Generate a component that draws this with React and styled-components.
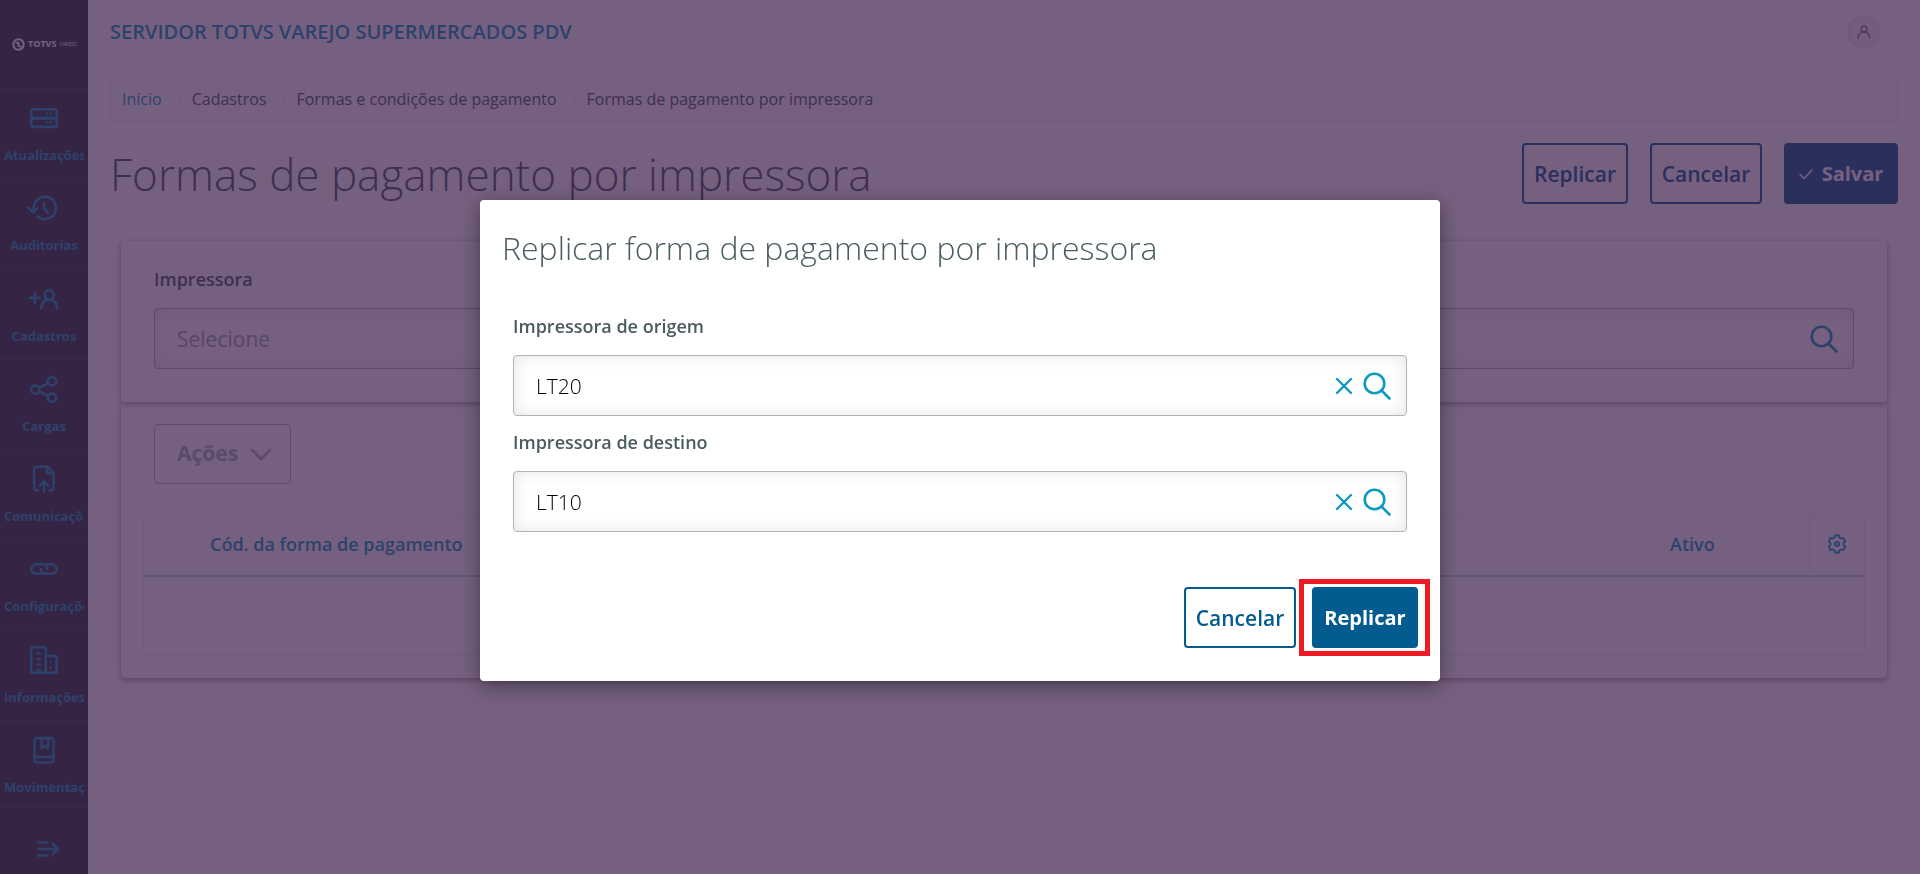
import React from "react";
import styled, { createGlobalStyle, css } from "styled-components";

const GlobalStyle = createGlobalStyle`
  *, *::before, *::after { box-sizing: border-box; }
  body {
    margin: 0;
    background: #fff;
    color: #4a5c60;
    font-family: "Open Sans", "Noto Sans", sans-serif;
    font-size: 16px;
  }
  button, input { font-family: inherit; }
`;

const Shell = styled.div`
  display: flex;
  height: 100vh;
  overflow: hidden;
`;

/* ---------- side menu ---------- */

const Sidebar = styled.nav`
  flex: 0 0 88px;
  display: flex;
  flex-direction: column;
  min-width: 0;
  overflow: hidden;
  background: #2c3739;
`;

const Logo = styled.div`
  flex: 0 0 88px;
  display: flex;
  align-items: center;
  padding-left: 12px;
  color: #fff;
  white-space: nowrap;
`;

const Brand = styled.span`
  margin: 0 3px;
  font-size: 9px;
  font-weight: 700;
  line-height: 12px;
`;

const BrandSub = styled.span`
  font-size: 5px;
  line-height: 12px;
`;

const MenuLink = styled.a`
  flex: 1;
  display: flex;
  flex-direction: column;
  gap: 13px;
  padding: 15px 4px 0;
  border-top: 1px solid #3a4648;
  color: #0c9abe;
  text-decoration: none;

  svg {
    flex: none;
    align-self: center;
    height: 28px;
  }
`;

const MenuText = styled.span`
  overflow: hidden;
  font-size: 13px;
  font-weight: 700;
  line-height: 20px;
  text-align: center;
  white-space: nowrap;
`;

const MenuToggle = styled.button`
  flex: 0 0 67px;
  display: flex;
  justify-content: center;
  margin-top: -3px;
  padding: 27px 0 0 6px;
  border: 0;
  border-top: 1px solid #3a4648;
  background: #2c3739;
  color: #0c9abe;
`;

/* ---------- page ---------- */

const Page = styled.main`
  flex: 1;
  min-width: 0;
  padding: 0 22px;
`;

const TopBar = styled.header`
  display: flex;
  align-items: center;
  justify-content: space-between;
  height: 64px;
  padding-right: 18px;
`;

const SystemName = styled.span`
  color: #0c9abe;
  font-size: 20px;
  font-weight: 600;
  line-height: 24px;
`;

const Avatar = styled.button`
  display: grid;
  place-items: center;
  width: 33px;
  height: 33px;
  padding: 0;
  border: 0;
  border-radius: 50%;
  background: #f4f4f4;
  box-shadow: inset 0 0 4px rgba(0, 0, 0, 0.1);
  color: #4a5c60;
`;

const Breadcrumb = styled.nav`
  display: flex;
  align-items: center;
  height: 44px;
  margin-top: 13px;
  padding-left: 11px;
  border: 1px solid #eceeee;
  border-radius: 4px;
  line-height: 24px;

  a { color: #0c9abe; text-decoration: none; }
  svg { margin: 0 10px 0 9px; color: #eceeee; }
`;

const TitleRow = styled.div`
  display: flex;
  align-items: center;
  justify-content: space-between;
  margin: 22px 0 37px;
`;

const PageTitle = styled.h1`
  margin: 0;
  font-size: 44px;
  font-weight: 300;
  line-height: 60px;
`;

const ButtonRow = styled.div`
  display: flex;
  justify-content: flex-end;
  gap: ${(p) => p.$gap};
`;

const Button = styled.button`
  display: flex;
  align-items: center;
  justify-content: center;
  gap: 9px;
  width: ${(p) => p.$width};
  height: 61px;
  padding: 0;
  border: 2px solid #045b8f;
  border-radius: 4px;
  line-height: 28px;
  ${(p) =>
    p.$primary
      ? css`
          background: #045b8f;
          color: #fff;
          font-size: 20px;
          font-weight: 700;
        `
      : css`
          background: #fff;
          color: #045b8f;
          font-size: 21px;
          font-weight: 600;
        `}
`;

const Card = styled.section`
  position: relative;
  z-index: ${(p) => (p.$raised ? 1 : 0)};
  margin: 0 11px;
  padding: ${(p) => p.$padding};
  border-radius: 4px;
  background: #fff;
  box-shadow: 0 2px 6px rgba(0, 0, 0, 0.4);
`;

const Label = styled.label`
  display: block;
  margin-bottom: 17px;
  color: #4a5c60;
  font-size: 18px;
  font-weight: 600;
  line-height: 24px;
`;

const InputBox = styled.div`
  display: flex;
  align-items: center;
  gap: 9px;
  height: 61px;
  padding: 0 15px 0 22px;
  border: 1px solid #a9b5b7;
  border-radius: 4px;
  background: #fff;
  box-shadow: inset 0 0 16px rgba(0, 0, 0, 0.1);
`;

const TextInput = styled.input`
  flex: 1;
  min-width: 0;
  padding: 0;
  border: 0;
  outline: 0;
  background: none;
  color: #000;
  font-size: 21px;
  font-weight: ${(p) => (p.$light ? 300 : 400)};
  line-height: 28px;

  &::placeholder { color: #9ca7a9; opacity: 1; }
`;

const IconButton = styled.button`
  display: flex;
  padding: 0;
  border: 0;
  background: none;
  color: #0c9abe;
`;

const ActionsButton = styled.button`
  display: flex;
  align-items: center;
  gap: 12px;
  height: 60px;
  margin: 0 11px 30px;
  padding: 0 18px 2px 22px;
  border: 1px solid #a9b5b7;
  border-radius: 4px;
  background: #fff;
  color: #a9b5b7;
  font-size: 21px;
  font-weight: 700;
  line-height: 28px;
`;

const Table = styled.table`
  width: 100%;
  border: 1px solid #eceeee;
  border-radius: 4px;
  border-spacing: 0;
  table-layout: fixed;
`;

const HeadCell = styled.th`
  width: ${(p) => p.$width};
  height: 62px;
  padding: 0 0 2px ${(p) => p.$indent};
  border-bottom: 2px solid #b6dbe8;
  border-left: ${(p) => (p.$divided ? "1px solid #eceeee" : "0")};
  color: #0c9abe;
  font-size: 18px;
  font-weight: 600;
  line-height: 24px;
  text-align: left;
`;

const EmptyCell = styled.td`
  height: 78px;
  padding: 0;
`;

/* ---------- modal ---------- */

const Overlay = styled.div`
  position: fixed;
  inset: 0;
  z-index: 2;
  display: flex;
  align-items: center;
  justify-content: center;
  padding-top: 7px;
  background: rgba(59, 28, 72, 0.7);
`;

const Modal = styled.div`
  width: 50%;
  padding: 26px 22px 33px;
  border-radius: 4px;
  background: #fff;
  box-shadow: 0 5px 20px rgba(0, 0, 0, 0.4);
`;

const ModalTitle = styled.h2`
  margin: 0 0 44px;
  font-size: 32px;
  font-weight: 300;
  line-height: 44px;
`;

const Fields = styled.div`
  display: flex;
  flex-direction: column;
  gap: 14px;
  margin-bottom: 55px;
  padding: 0 11px;
`;

const Highlight = styled.div`
  position: relative;

  &::after {
    content: "";
    position: absolute;
    inset: -8px -12px -8px -13px;
    border: 5px solid #ed1c24;
    pointer-events: none;
  }
`;

/* ---------- icons ---------- */

const Icon = ({ size = 28, box = 28, width = 2.6, children }) => (
  <svg
    width={size}
    height={size}
    viewBox={`0 0 ${box} ${box}`}
    fill="none"
    stroke="currentColor"
    strokeWidth={width}
    strokeLinecap="round"
    strokeLinejoin="round"
    overflow="visible"
    aria-hidden="true"
  >
    {children}
  </svg>
);

const icons = {
  server: (
    <Icon>
      <rect x="1.3" y="5.3" width="25.4" height="8.8" rx="2.2" />
      <rect x="1.3" y="14.1" width="25.4" height="8.8" rx="2.2" />
      <path d="M16.6 9.8h.1M20.6 9.8h.1M16.6 18.4h.1M20.6 18.4h.1" />
    </Icon>
  ),
  history: (
    <Icon>
      <path d="M3.4 15.5C3.4 7.8 8.6 2.8 14.800 2.800a11.200 11.200 0 1 1-7.200 19.800" />
      <path d="M-1.500 14l4.600 4.300 4.400-4.300M14 8.500v6l4 4.200" />
    </Icon>
  ),
  userAdd: (
    <Icon>
      <circle cx="19.2" cy="10" r="4.6" />
      <path d="M11.2 23.5c0-5.6 3.4-8.8 8-8.8s8 3.2 8 8.800M0 12.800h9.600M4.800 8v9.600" />
    </Icon>
  ),
  share: (
    <Icon>
      <circle cx="5.4" cy="14.6" r="4.2" />
      <circle cx="22" cy="6.2" r="4.2" />
      <circle cx="22" cy="22.6" r="4.2" />
      <path d="M9.200 12.700l9-4.600M9.200 16.500l9 4.300" />
    </Icon>
  ),
  fileUp: (
    <Icon size={30} box={30}>
      <path d="M8.500 27H7a2.600 2.600 0 0 1-2.600-2.600V4.400A2.600 2.600 0 0 1 7 1.800h11.600l6.600 6.800v15.800a2.600 2.600 0 0 1-2.600 2.600H21" />
      <path d="M18.200 2v7h6.800M15 29V17.800M10.400 22l4.600-4.600 4.600 4.600" />
    </Icon>
  ),
  link: (
    <Icon>
      <path d="M11.500 18.800H6a4.800 4.800 0 0 1 0-9.600h6.500c2.600 0 4.600 2 4.600 4.800" />
      <path d="M16.500 9.200H22a4.800 4.800 0 0 1 0 9.600h-6.500c-2.600 0-4.600-2-4.600-4.800" />
    </Icon>
  ),
  building: (
    <Icon>
      <path d="M1.300 26.700V3.200a2 2 0 0 1 2-2h10.500a2 2 0 0 1 2 2v23.500zM15.800 10h8.900a2 2 0 0 1 2 2v14.700H15.800" />
      <path d="M7 7.500h3M7 13h3M7 18.500h3M7 24h3M20.600 16v.1M20.600 21.500v.1" />
    </Icon>
  ),
  book: (
    <Icon size={30} box={30}>
      <path d="M4.800 22.500V5a2.800 2.800 0 0 1 2.800-2.800h14.800A2.800 2.800 0 0 1 25.200 5v20.600a2.800 2.800 0 0 1-2.800 2.800H7.600a2.800 2.800 0 0 1-2.800-2.800v-3.100h20" />
      <path d="M12.500 2v11.200l3.500-2.800 3.500 2.800V2" />
    </Icon>
  ),
};

const SearchIcon = () => (
  <Icon>
    <circle cx="11.5" cy="11.5" r="9.8" />
    <path d="M18.500 18.500l8 8" />
  </Icon>
);

const CloseIcon = () => (
  <Icon size={20} box={20} width={2.4}>
    <path d="M3 3l14 14M17 3L3 17" />
  </Icon>
);

const Chevron = () => (
  <svg width="11" height="42" viewBox="0 0 11 42" fill="none" stroke="currentColor" aria-hidden="true">
    <path d="M0 0l10 23L1 42" />
  </svg>
);

const menu = [
  ["Atualizações", "server"],
  ["Auditorias", "history"],
  ["Cadastros", "userAdd"],
  ["Cargas", "share"],
  ["Comunicações", "fileUp"],
  ["Configurações", "link"],
  ["Informações", "building"],
  ["Movimentações", "book"],
];

const crumbs = ["Cadastros", "Formas e condições de pagamento", "Formas de pagamento por impressora"];

const LookupField = ({ id, label, value }) => (
  <div>
    <Label htmlFor={id}>{label}</Label>
    <InputBox>
      <TextInput id={id} $light defaultValue={value} />
      <IconButton type="button" aria-label="Limpar"><CloseIcon /></IconButton>
      <IconButton type="button" aria-label="Pesquisar"><SearchIcon /></IconButton>
    </InputBox>
  </div>
);

export default function App() {
  return (
    <>
      <GlobalStyle />
      <Shell>
        <Sidebar>
          <Logo>
            <svg width="13" height="13" viewBox="0 0 13 13" fill="none" stroke="currentColor" aria-hidden="true">
              <circle cx="6.5" cy="6.5" r="5.2" strokeWidth="2" />
              <path d="M3.500 4.500l3 .5v3l3 .8" strokeWidth="1.8" />
            </svg>
            <Brand>TOTVS</Brand>
            <BrandSub>VAREJO</BrandSub>
          </Logo>
          {menu.map(([text, icon]) => (
            <MenuLink href="#" key={text}>
              {icons[icon]}
              <MenuText>{text}</MenuText>
            </MenuLink>
          ))}
          <MenuToggle type="button" aria-label="Expandir menu">
            <Icon>
              <path d="M5 7.500h9.500M5 14h20M5 20.500h9.500M20 9l5 5-5 5" />
            </Icon>
          </MenuToggle>
        </Sidebar>

        <Page>
          <TopBar>
            <SystemName>SERVIDOR TOTVS VAREJO SUPERMERCADOS PDV</SystemName>
            <Avatar type="button" aria-label="Perfil">
              <Icon size={14} box={14} width={1.2}>
                <circle cx="7" cy="4" r="3" />
                <path d="M1.200 13c0-3.800 2.600-6 5.800-6s5.800 2.200 5.800 6" />
              </Icon>
            </Avatar>
          </TopBar>

          <Breadcrumb aria-label="Navegação">
            <a href="#">Início</a>
            {crumbs.map((text) => (
              <React.Fragment key={text}>
                <Chevron />
                <span>{text}</span>
              </React.Fragment>
            ))}
          </Breadcrumb>

          <TitleRow>
            <PageTitle>Formas de pagamento por impressora</PageTitle>
            <ButtonRow $gap="22px">
              <Button type="button" $width="106px">Replicar</Button>
              <Button type="button" $width="112px">Cancelar</Button>
              <Button type="button" $width="114px" $primary>
                <Icon size={14} box={14} width={1.6}>
                  <path d="M1 7.500l4 4L13 3" />
                </Icon>
                Salvar
              </Button>
            </ButtonRow>
          </TitleRow>

          <Card $raised $padding="26px 33px 33px">
            <Label htmlFor="impressora">Impressora</Label>
            <InputBox>
              <TextInput id="impressora" placeholder="Selecione" />
              <IconButton type="button" aria-label="Pesquisar"><SearchIcon /></IconButton>
            </InputBox>
          </Card>

          <Card $padding="22px">
            <ActionsButton type="button" disabled>
              Ações
              <Icon size={22} box={22} width={2.8}>
                <path d="M2 8l9 9 9-9" />
              </Icon>
            </ActionsButton>
            <Table>
              <thead>
                <tr>
                  <HeadCell $indent="66px">Cód. da forma de pagamento</HeadCell>
                  <HeadCell $indent="22px" $width="161px">Ativo</HeadCell>
                  <HeadCell $indent="17px" $width="55px" $divided>
                    <IconButton type="button" aria-label="Configurar colunas">
                      <Icon size={20} box={20} width={1.8}>
                        <path d="M7.500 3.600L8 1.500h4l.5 2.100 1.600.9 2.100-.7 2 3.500-1.600 1.500v2.400l1.600 1.500-2 3.500-2.100-.7-1.600.9-.5 2.100H8l-.5-2.100-1.600-.9-2.100.7-2-3.500 1.600-1.500V8.800L1.800 7.300l2-3.500 2.100.7z" />
                        <circle cx="10" cy="10" r="2" />
                      </Icon>
                    </IconButton>
                  </HeadCell>
                </tr>
              </thead>
              <tbody>
                <tr>
                  <EmptyCell colSpan={3} />
                </tr>
              </tbody>
            </Table>
          </Card>
        </Page>
      </Shell>

      <Overlay>
        <Modal role="dialog" aria-modal="true" aria-labelledby="modal-title">
          <ModalTitle id="modal-title">Replicar forma de pagamento por impressora</ModalTitle>
          <Fields>
            <LookupField id="origem" label="Impressora de origem" value="LT20" />
            <LookupField id="destino" label="Impressora de destino" value="LT10" />
          </Fields>
          <ButtonRow $gap="16px">
            <Button type="button" $width="112px">Cancelar</Button>
            <Highlight>
              <Button type="button" $width="106px" $primary>Replicar</Button>
            </Highlight>
          </ButtonRow>
        </Modal>
      </Overlay>
    </>
  );
}
